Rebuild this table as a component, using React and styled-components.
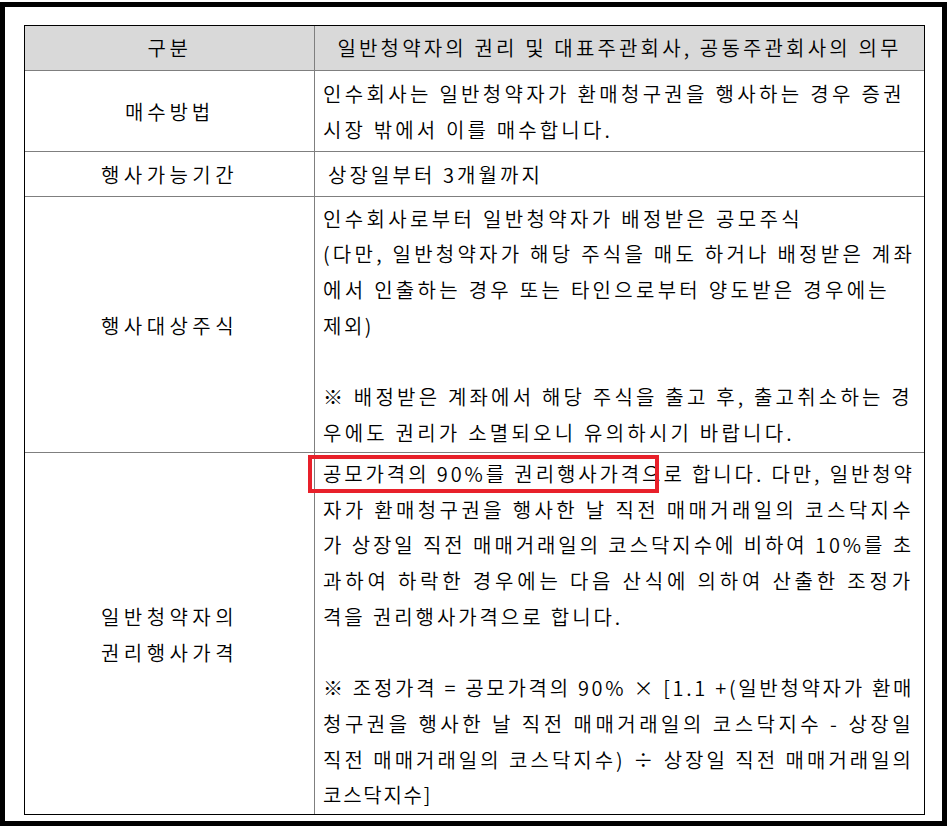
import React, { useLayoutEffect, useRef, useState } from "react";
import styled, { createGlobalStyle } from "styled-components";

const GlobalStyle = createGlobalStyle`
  html, body { margin: 0; padding: 0; background: #ffffff; }
  body { font-family: "Noto Sans CJK KR", "Noto Sans", sans-serif; color: #000; }
`;

const Page = styled.div`
  width: 948px;
  height: 829px;
  padding-top: 2px;
  box-sizing: border-box;
  background: #fff;
  overflow: hidden;
`;

const Frame = styled.div`
  width: 947px;
  height: 824px;
  box-sizing: border-box;
  border: 5px solid #000;
  padding: 18px 17px 6px 19px;
  background: #fff;
`;

const Table = styled.div`
  display: grid;
  grid-template-columns: 289px 1fr;
  grid-template-rows: 45px 81px 45px 256px 1fr;
  height: 100%;
  box-sizing: border-box;
  border: 1px solid #000;
  font-size: 20px;
  font-weight: 350;
  line-height: 35.7px;
  word-spacing: 0;
`;

const Cell = styled.div`
  position: relative;
  box-sizing: border-box;
  display: flex;
  flex-direction: column;
  justify-content: center;
  align-items: ${(p) => (p.$side === "left" ? "center" : "flex-start")};
  padding: ${(p) => (p.$side === "left" ? "0" : "0 0 0 8px")};
  padding-top: ${(p) => p.$shift || 0}px;
  border-bottom: ${(p) => (p.$last ? "none" : "1px solid #7f7f7f")};
  border-left: ${(p) => (p.$side === "right" ? "1px solid #7f7f7f" : "none")};
  background: ${(p) => (p.$head ? "#d9d9d9" : "#fff")};
  ${(p) => p.$head && p.$side === "right" && "align-items: center; padding-left: 0;"}
`;

const LineBox = styled.div`
  height: 35.7px;
  white-space: nowrap;
  padding-left: ${(p) => p.$indent || 0}px;
`;

const LineText = styled.span`
  display: inline-block;
  white-space: pre;
`;

const Highlight = styled.div`
  position: absolute;
  left: -7px;
  top: 2px;
  width: 351px;
  height: 38px;
  box-sizing: border-box;
  border: 4px solid #e8202a;
  pointer-events: none;
`;

function Line({ w, indent, children }) {
  const ref = useRef(null);
  const [ls, setLs] = useState(null);
  useLayoutEffect(() => {
    const fit = () => {
      const el = ref.current;
      if (!el || !w) return;
      const n = [...el.textContent].length;
      if (!n) return;
      const cur = parseFloat(getComputedStyle(el).letterSpacing) || 0;
      const natural = el.getBoundingClientRect().width - n * cur;
      setLs(Math.round(((w - natural) / n) * 100) / 100);
    };
    fit();
    if (document.fonts && document.fonts.ready) document.fonts.ready.then(fit);
  }, [w]);
  return (
    <LineBox $indent={indent}>
      <LineText ref={ref} style={ls != null ? { letterSpacing: `${ls}px` } : undefined}>
        {children}
      </LineText>
    </LineBox>
  );
}

const rows = [
  {
    head: true,
    left: [["구분", 44]],
    right: [["일반청약자의 권리 및 대표주관회사, 공동주관회사의 의무", 564]],
  },
  {
    left: [["매수방법", 89]],
    right: [
      ["인수회사는 일반청약자가 환매청구권을 행사하는 경우 증권", 582],
      ["시장 밖에서 이를 매수합니다.", 290],
    ],
    shift: 2,
  },
  {
    left: [["행사가능기간", 137]],
    right: [["상장일부터 3개월까지", 215, 5]],
    shift: 1,
  },
  {
    left: [["행사대상주식", 137]],
    right: [
      ["인수회사로부터 일반청약자가 배정받은 공모주식", 480],
      ["(다만, 일반청약자가 해당 주식을 매도 하거나 배정받은 계좌", 592],
      ["에서 인출하는 경우 또는 타인으로부터 양도받은 경우에는", 567],
      ["제외)", 51],
      ["", 0],
      ["※ 배정받은 계좌에서 해당 주식을 출고 후, 출고취소하는 경", 590],
      ["우에도 권리가 소멸되오니 유의하시기 바랍니다.", 472],
    ],
    shift: 2,
  },
  {
    left: [
      ["일반청약자의", 137],
      ["권리행사가격", 137],
    ],
    right: [
      ["공모가격의 90%를 권리행사가격으로 합니다. 다만, 일반청약", 592],
      ["자가 환매청구권을 행사한 날 직전 매매거래일의 코스닥지수", 591],
      ["가 상장일 직전 매매거래일의 코스닥지수에 비하여 10%를 초", 591],
      ["과하여 하락한 경우에는 다음 산식에 의하여 산출한 조정가", 591],
      ["격을 권리행사가격으로 합니다.", 300],
      ["", 0],
      ["※ 조정가격 = 공모가격의 90% × [1.1 +(일반청약자가 환매", 591],
      ["청구권을 행사한 날 직전 매매거래일의 코스닥지수 - 상장일", 591],
      ["직전 매매거래일의 코스닥지수) ÷ 상장일 직전 매매거래일의", 591],
      ["코스닥지수]", 109],
    ],
    shift: 2,
    last: true,
    mark: true,
  },
];

export default function App() {
  return (
    <>
      <GlobalStyle />
      <Page>
        <Frame>
          <Table>
            {rows.map((r, i) => (
              <React.Fragment key={i}>
                <Cell $side="left" $head={r.head} $last={r.last} $shift={r.shift}>
                  {r.left.map(([t, w], j) => (
                    <Line key={j} w={w}>{t}</Line>
                  ))}
                </Cell>
                <Cell $side="right" $head={r.head} $last={r.last} $shift={r.shift}>
                  {r.right.map(([t, w, ind], j) => (
                    <Line key={j} w={w} indent={ind}>{t}</Line>
                  ))}
                  {r.mark && <Highlight />}
                </Cell>
              </React.Fragment>
            ))}
          </Table>
        </Frame>
      </Page>
    </>
  );
}
